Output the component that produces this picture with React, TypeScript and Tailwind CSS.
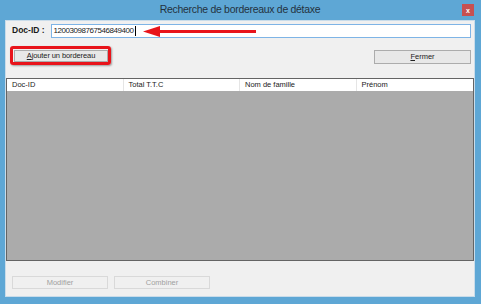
import React from "react";

export default function App() {
  const font = { fontFamily: '"Liberation Sans", Arial, sans-serif' };
  return (
    <div
      className="relative w-[481px] h-[304px] bg-[#5ea7d5] flex flex-col pl-[5px] pr-[6px] pb-[7px] overflow-hidden"
      style={font}
    >
      {/* title bar */}
      <div className="relative h-[20px] flex items-center justify-center">
        <span className="text-[10.5px] text-[#24323e] tracking-[-0.3px]">Recherche de bordereaux de détaxe</span>
        <div className="absolute right-[1px] top-[4px] w-[12px] h-[12px] bg-[#c75050] flex items-center justify-center">
          <span className="text-white text-[7px] font-bold leading-none">x</span>
        </div>
      </div>
      {/* content */}
      <div className="flex-1 bg-[#f0f0f0] border border-[#c9dcea] flex flex-col">
        <div className="flex items-start pt-[3px] pl-[6px] pr-[3px] gap-[6px] h-[17px]">
          <span className="text-[8.5px] font-bold text-[#1a1a1a] leading-[10px] pt-[1px]">Doc-ID :</span>
          <div className="flex-1 h-[14px] bg-white border border-[#7eb4e6] flex items-center pl-[2px]">
            <span className="text-[8px] text-[#222] leading-none tracking-[-0.45px]">12003098767546849400</span>
            <span className="w-[1px] h-[10px] bg-[#000] ml-[1px]"></span>
          </div>
        </div>
        <div className="flex items-start justify-between pt-[12px] pl-[8px] pr-[3px]">
          <div className="w-[94px] h-[12px] bg-[#e8e8e8] border border-[#acacac] flex items-center justify-center">
            <span className="text-[7.5px] text-[#222] leading-none tracking-[-0.1px]">
              <u>A</u>jouter un bordereau
            </span>
          </div>
          <div className="w-[97px] h-[14px] bg-[#e8e8e8] border border-[#acacac] flex items-center justify-center">
            <span className="text-[7.5px] text-[#222] leading-none">
              <u>F</u>ermer
            </span>
          </div>
        </div>
        {/* grid */}
        <div className="mt-[14px] h-[183px] border border-[#646464] bg-[#ababab] flex flex-col">
          <div className="h-[12px] bg-white grid grid-cols-4 text-[7.5px] text-[#222]">
            <div className="pl-[5px] border-r border-[#e5e5e5] flex items-center">Doc-ID</div>
            <div className="pl-[5px] border-r border-[#e5e5e5] flex items-center">Total T.T.C</div>
            <div className="pl-[5px] border-r border-[#e5e5e5] flex items-center">Nom de famille</div>
            <div className="pl-[5px] flex items-center">Prénom</div>
          </div>
        </div>
        <div className="flex gap-[6px] pt-[15px] pl-[6px]">
          <div className="w-[96px] h-[13px] bg-[#f0f0f0] border border-[#d9d9d9] flex items-center justify-center">
            <span className="text-[7.5px] text-[#a0a0a0] leading-none">Modifier</span>
          </div>
          <div className="w-[96px] h-[13px] bg-[#f0f0f0] border border-[#d9d9d9] flex items-center justify-center">
            <span className="text-[7.5px] text-[#a0a0a0] leading-none">Combiner</span>
          </div>
        </div>
      </div>
      {/* annotation: red rectangle */}
      <div className="absolute left-[10px] top-[46px] w-[101px] h-[19px] border-[3px] border-[#e8141b] rounded-[3px] shadow-[1px_1px_2px_rgba(0,0,0,0.35)]"></div>
      {/* annotation: arrow */}
      <svg className="absolute left-[140px] top-[24px]" width="120" height="16" viewBox="0 0 120 16">
        <line x1="16" y1="7.5" x2="116" y2="7.5" stroke="#e8141b" strokeWidth="3" />
        <polygon points="3,7.5 20,2 20,13" fill="#e8141b" />
      </svg>
    </div>
  );
}
